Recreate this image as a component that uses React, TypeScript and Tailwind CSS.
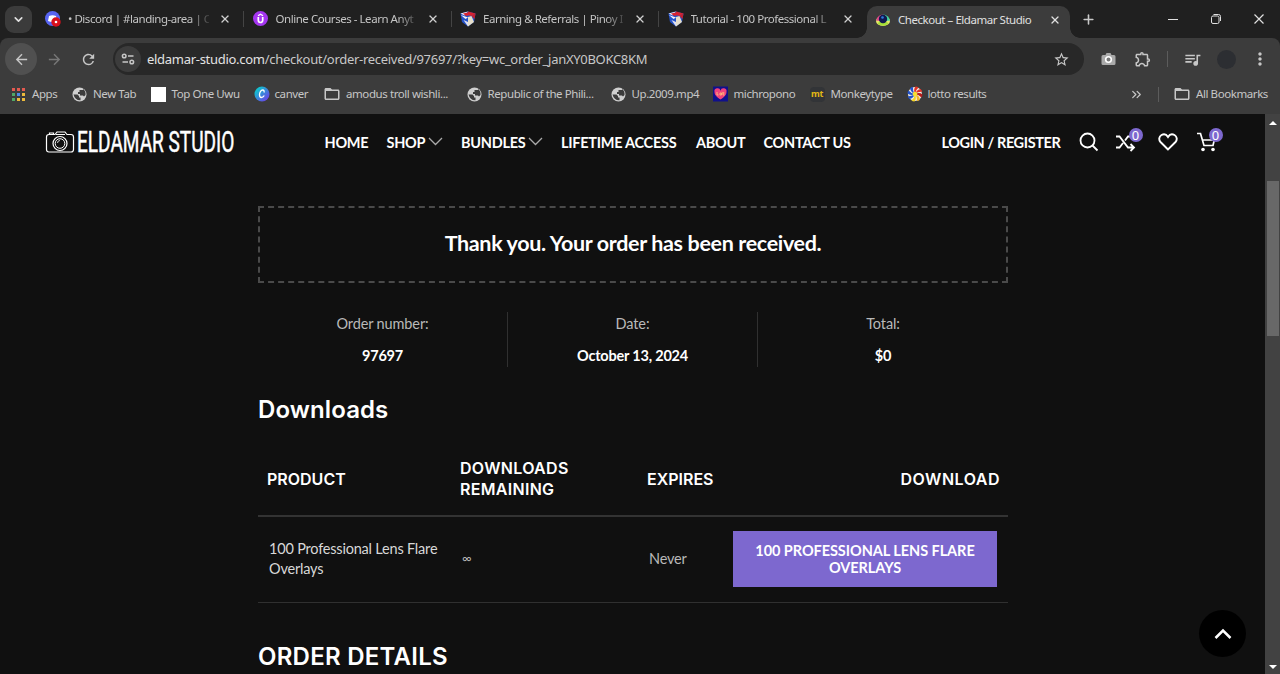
import { ReactNode } from "react";
import clsx from "clsx";
import {
  MdArrowBack,
  MdArrowForward,
  MdFolderOpen,
  MdMoreVert,
  MdOutlineExtension,
  MdQueueMusic,
  MdRefresh,
  MdStarBorder,
} from "react-icons/md";
import { ChevronDown, ChevronsRight, Plus, X } from "lucide-react";

function DiscordIcon() {
  return (
    <svg width="16" height="16" viewBox="0 0 16 16">
      <circle cx="7.5" cy="7.5" r="7.5" fill="#5865f2" />
      <path d="M4 5q3.500-1.500 7 0l1 5q-4.500 2-9 0z" fill="#fff" />
      <circle cx="11" cy="11" r="4.700" fill="#d8101c" />
      <circle cx="11" cy="11" r="1.300" fill="#fff" />
    </svg>
  );
}

function UdemyIcon() {
  return (
    <svg width="16" height="16" viewBox="0 0 16 16">
      <circle cx="7.500" cy="7.500" r="7.500" fill="#a435f0" />
      <path d="M5 4.800 7.500 3.200 10 4.800" fill="none" stroke="#fff" strokeWidth="1.300" />
      <path d="M5.300 6v3.300a2.200 2.200 0 0 0 4.400 0V6" fill="none" stroke="#fff" strokeWidth="1.700" />
    </svg>
  );
}

function CubeIcon() {
  return (
    <svg width="16" height="16" viewBox="0 0 16 16">
      <path d="M.5 2.500 8 .5l7.500 2L14 11l-6 4.500L2 11z" fill="#2452c8" />
      <path d="M.5 2.500 8 .5 4.500 4.500z" fill="#e8e8f4" />
      <path d="M8 .5l7.500 2-4 2.500L8 4z" fill="#d8232f" />
      <path d="M3 2.500 8 1.500 10 4 6 5z" fill="#d8232f" />
      <path d="M8 6l3.500-1L14 11l-6 4.500z" fill="#e6dfcb" />
      <path d="M.8 4 8 6.500 5.500 8z" fill="#f4f4ff" />
      <path d="M11.500 5l4-2.500L14.500 8z" fill="#c51f2c" />
      <path d="M3.500 9 8 11v4.500z" fill="#dcdff2" />
    </svg>
  );
}

function EyeIcon() {
  return (
    <svg width="16" height="16" viewBox="0 0 16 16">
      <ellipse cx="8" cy="9" rx="7" ry="5" fill="#e9e86a" />
      <path d="M1 8.500Q3 2.500 8 2.500L5 9z" fill="#e0468b" />
      <path d="M8 2.500Q13.500 3 15 8.500L11 9z" fill="#42d6a0" />
      <path d="M2.500 11.500q5.500 4.500 11 0l-2-2H4.500z" fill="#a5df38" />
      <circle cx="8" cy="7" r="4.200" fill="#101a50" />
      <circle cx="7.500" cy="5.500" r="1.300" fill="#2d7ddb" />
    </svg>
  );
}

function GlobeIcon() {
  return (
    <svg width="15" height="15" viewBox="0 0 15 15">
      <circle cx="7.500" cy="7.500" r="7" fill="#cfcfcf" />
      <path d="M1.500 7.500h4l1.500 1.500v1.500h1.500v2.800Q3 13.500 1.500 7.500z" fill="#3c3c3c" />
      <path d="M7.500 3h3.500v-1q3 2 2.500 6l-1.500 1.500-1-1H8V7H6V5h1.500z" fill="#3c3c3c" />
    </svg>
  );
}

function AppsIcon() {
  const colors = [
    "bg-[#e35a50]", "bg-[#e35a50]", "bg-[#e35a50]",
    "bg-[#4fa866]", "bg-[#4c8ae8]", "bg-[#edbb3c]",
    "bg-[#4fa866]", "bg-[#edbb3c]", "bg-[#edbb3c]",
  ];
  return (
    <div className="ml-px grid w-[13px] grid-cols-3 gap-[2px]">
      {colors.map((color, i) => (
        <span key={i} className={clsx("h-[3px]", color)} />
      ))}
    </div>
  );
}

function CanvaIcon() {
  return (
    <svg width="16" height="16" viewBox="0 0 16 16">
      <defs>
        <linearGradient id="canva" x1="0" y1="0" x2="1" y2="1">
          <stop offset=".2" stopColor="#12bfd0" />
          <stop offset="1" stopColor="#7a2bea" />
        </linearGradient>
      </defs>
      <circle cx="8" cy="8" r="7.500" fill="url(#canva)" />
      <path d="M10 6.500Q10.500 4 8.700 4C6.800 4 5.500 6.500 5.500 8.800c0 3.800 3.200 3.200 4.800.7" fill="none" stroke="#fff" strokeWidth="1.300" />
    </svg>
  );
}

function HeartTileIcon() {
  return (
    <svg width="16" height="16" viewBox="0 0 16 16">
      <rect width="15" height="15" y=".5" fill="#10108c" />
      <path d="M7.500 13.500C3 10.500 1.500 8.500 1.500 6a3 3 0 0 1 6-1.300 3 3 0 0 1 6 1.300c0 2.500-1.500 4.500-6 7.500z" fill="#f0427c" />
      <path d="M4 6v3h1.500M7 7h1.500v2H7zM10 6v3h1.500M9.500 7h2" stroke="#ffc078" strokeWidth=".9" fill="none" />
    </svg>
  );
}

function PinwheelIcon() {
  const blades = ["#e33327", "#e33327", "#b31d1d", "#f4b427", "#f4d427", "#2453c9", "#2453c9", "#2453c9"];
  return (
    <svg width="16" height="16" viewBox="0 0 16 16">
      <circle cx="8" cy="8" r="7" fill="#f2efe6" />
      {blades.map((fill, i) => (
        <path key={i} d="M8 8Q6 3.500 8.500.5 10.500.5 11.500 1.500 8.500 4 8 8z" fill={fill} transform={`rotate(${i * 45} 8 8)`} />
      ))}
      <circle cx="8" cy="8" r="2.300" fill="#f8df32" />
    </svg>
  );
}

type Tab = { title: string; icon: ReactNode };

const tabs: Tab[] = [
  { title: "• Discord | #landing-area | O", icon: <DiscordIcon /> },
  { title: "Online Courses - Learn Anyt", icon: <UdemyIcon /> },
  { title: "Earning & Referrals | Pinoy I", icon: <CubeIcon /> },
  { title: "Tutorial - 100 Professional L", icon: <CubeIcon /> },
];

function TabStrip() {
  return (
    <div className="flex h-[38px] items-center bg-[#202020]">
      <div className="ml-[5px] mr-[5px] flex size-[27px] shrink-0 items-center justify-center rounded-[9px] bg-[#3b3b3b]">
        <ChevronDown size={13} strokeWidth={3} className="text-[#e0e0e0]" />
      </div>
      {tabs.map((tab, i) => (
        <div key={tab.title} className="flex w-[207.500px] shrink-0 items-center pl-2">
          <div className="w-[23px] shrink-0">{tab.icon}</div>
          <div className="w-[141px] whitespace-nowrap text-[11.500px] tracking-[-0.46px] text-[#c4c4c4] [mask-image:linear-gradient(to_right,black_122px,transparent_145px)]">
            {tab.title}
          </div>
          <X size={12} strokeWidth={2.600} className="ml-[10px] shrink-0 text-[#d0d0d0]" />
          {i < tabs.length - 1 && <span className="ml-[12px] h-4 w-px shrink-0 bg-[#444]" />}
        </div>
      ))}
      <div className="relative flex h-8 w-[202.500px] shrink-0 items-center self-end rounded-t-[10px] bg-[#3c3c3c] pb-[5px] pl-[8px]">
        <span className="absolute -left-[10px] bottom-0 size-[10px] bg-[radial-gradient(circle_at_0_0,#202020_9.500px,#3c3c3c_10px)]" />
        <span className="absolute -right-[10px] bottom-0 size-[10px] bg-[radial-gradient(circle_at_100%_0,#202020_9.500px,#3c3c3c_10px)]" />
        <div className="w-[23px] shrink-0"><EyeIcon /></div>
        <div className="w-[141px] whitespace-nowrap text-[11.500px] tracking-[-0.46px] text-[#e0e0e0]">Checkout – Eldamar Studio</div>
        <X size={12} strokeWidth={2.600} className="ml-[10px] text-[#e0e0e0]" />
      </div>
      <Plus size={15} strokeWidth={2.500} className="ml-[11.500px] text-[#c8c8c8]" />
      <div className="ml-auto flex items-center text-[#e0e0e0]">
        <span className="mr-[32px] h-px w-[10px] bg-[#e0e0e0]" />
        <svg width="12" height="12" viewBox="0 0 12 12" fill="none" stroke="currentColor" className="mr-[31px]">
          <rect x="1.500" y="3" width="7.500" height="7.500" rx="1.500" />
          <path d="M3.500 1.500H8.500a2 2 0 0 1 2 2V8" />
        </svg>
        <svg width="12" height="12" viewBox="0 0 12 12" stroke="currentColor" strokeWidth="1.200" className="mr-[15px]">
          <path d="M1.500 1.500l9 9M10.500 1.500l-9 9" />
        </svg>
      </div>
    </div>
  );
}

function Toolbar() {
  return (
    <div className="flex h-[42px] items-center rounded-t-lg bg-[#3c3c3c] text-[#c7c7c7]">
      <div className="ml-[5px] flex size-8 shrink-0 items-center justify-center rounded-full bg-[#505050]">
        <MdArrowBack size={17} />
      </div>
      <MdArrowForward size={17} className="ml-[9px] shrink-0 text-[#777]" />
      <MdRefresh size={17} className="ml-[17px] shrink-0" />
      <div className="ml-4 flex h-8 w-[971px] shrink-0 items-center rounded-full bg-[#282828] pl-[2px]">
        <div className="flex size-[26px] items-center justify-center rounded-full bg-[#3c3c3c]">
          <svg width="14" height="14" viewBox="0 0 14 14" fill="none" stroke="currentColor" strokeWidth="1.500">
            <circle cx="3.200" cy="4" r="1.800" />
            <path d="M7 4h5.500M1.500 10H7" />
            <circle cx="10.800" cy="10" r="1.800" />
          </svg>
        </div>
        <div className="ml-[6px] whitespace-nowrap pt-px text-[13px] tracking-[-0.29px] text-[#c7c7c7]">
          <span className="text-[#e3e3e3]">eldamar-studio.com</span>/checkout/order-received/97697/?key=wc_order_janXY0BOKC8KM
        </div>
        <MdStarBorder size={17} className="ml-auto mr-[14px]" />
      </div>
      <svg width="15" height="14" viewBox="0 0 15 14" className="ml-[17px] shrink-0">
        <path d="M2 3h2.500L5.500 1h4L10.500 3H13q1.500 0 1.500 1.500v7Q14.500 13 13 13H2Q.5 13 .5 11.500v-7Q.5 3 2 3z" fill="#aaa" />
        <circle cx="7.500" cy="7.500" r="2.800" fill="#777" stroke="#fff" strokeWidth="1.600" />
      </svg>
      <MdOutlineExtension size={18} className="ml-[18px] shrink-0" />
      <span className="ml-[15px] h-4 w-px shrink-0 bg-[#5c5c5c]" />
      <MdQueueMusic size={19} className="ml-[15px] shrink-0" />
      <span className="ml-[15px] size-[19px] shrink-0 rounded-full bg-[#2c2e32]" />
      <MdMoreVert size={20} className="ml-[14px] shrink-0" />
    </div>
  );
}

const folder = <MdFolderOpen size={18} className="-ml-0.5 text-[#c7c7c7]" />;

// width is the distance to the start of the next bookmark
const bookmarks = [
  { label: "Apps", icon: <AppsIcon />, width: "w-[61px]" },
  { label: "New Tab", icon: <GlobeIcon />, width: "w-[78.500px]" },
  { label: "Top One Uwu", icon: <span className="block size-[15px] bg-white" />, width: "w-[103px]" },
  { label: "canver", icon: <CanvaIcon />, width: "w-[71.500px]" },
  { label: "amodus troll wishli...", icon: folder, width: "w-[141.500px]" },
  { label: "Republic of the Phili...", icon: <GlobeIcon />, width: "w-[144px]" },
  { label: "Up.2009.mp4", icon: <GlobeIcon />, width: "w-[102px]" },
  { label: "michropono", icon: <HeartTileIcon />, width: "w-[97px]" },
  {
    label: "Monkeytype",
    icon: <span className="flex size-[15px] items-center justify-center rounded-sm bg-[#323437] text-[9px] font-bold text-[#e2b714]">mt</span>,
    width: "w-[97px]",
  },
  { label: "lotto results", icon: <PinwheelIcon />, width: "w-[90px]" },
];

function BookmarksBar() {
  return (
    <div className="flex h-[34px] items-center bg-[#3c3c3c] pb-[6px] pl-[11px] text-[11.500px] tracking-[-0.42px] text-[#c7c7c7]">
      {bookmarks.map((item) => (
        <div key={item.label} className={clsx("flex shrink-0 items-center whitespace-nowrap", item.width)}>
          <div className="w-[21px] shrink-0">{item.icon}</div>
          {item.label}
        </div>
      ))}
      <ChevronsRight size={15} className="ml-auto shrink-0" />
      <span className="ml-[14px] h-[15px] w-px shrink-0 bg-[#5c5c5c]" />
      <MdFolderOpen size={18} className="ml-[14px] shrink-0" />
      <span className="ml-[5px] w-[84px] shrink-0 whitespace-nowrap">All Bookmarks</span>
    </div>
  );
}

function Logo() {
  return (
    <svg width="194" height="40" viewBox="0 -5 194 40" fill="none" stroke="#fff" className="-mr-1">
      <path d="M4 7.500h6l2-2.500h8l2 2.500h4q2.500 0 2.500 2.500v12.500q0 2.500-2.500 2.500h-22Q1.500 25 1.500 22.500V10Q1.500 7.500 4 7.500zM4.500 7V6h4v1.500M11 7.500h9" strokeWidth="1.200" />
      <circle cx="15" cy="16.500" r="7" strokeWidth="1.200" />
      <circle cx="15" cy="16.500" r="4.800" />
      <path d="M12.500 16a2.500 2.500 0 0 1 2.500-2.500" strokeWidth=".8" />
      <text
        transform="translate(32 25) scale(.56 1)"
        fill="#fff"
        stroke="#fff"
        strokeWidth=".5"
        fontFamily="Roboto, 'Liberation Sans', sans-serif"
        fontSize="29.500"
        fontWeight="400"
        textLength="281"
        lengthAdjust="spacingAndGlyphs"
      >
        ELDAMAR STUDIO
      </text>
    </svg>
  );
}

const navItems = [
  { label: "HOME", width: "w-[62px]" },
  { label: "SHOP", width: "w-[74.500px]", menu: true },
  { label: "BUNDLES", width: "w-[100px]", menu: true },
  { label: "LIFETIME ACCESS", width: "w-[135px]" },
  { label: "ABOUT", width: "w-[67.500px]" },
  { label: "CONTACT US", width: "w-[178px]" },
];

function CountBadge() {
  return (
    <span className="absolute -right-[7px] -top-[4px] flex size-[14px] items-center justify-center rounded-full bg-[#7d68cf] font-['Noto_Sans',sans-serif] text-[13px] font-normal leading-none text-white">
      0
    </span>
  );
}

function SiteHeader() {
  return (
    <header className="flex h-14 items-center pl-[45px] font-['Lato',sans-serif] text-[14.500px] font-bold text-white">
      <Logo />
      <nav className="ml-[89.500px] flex pt-[2px] tracking-[-0.27px]">
        {navItems.map((item) => (
          <div key={item.label} className={clsx("flex shrink-0 items-center whitespace-nowrap", item.width)}>
            {item.label}
            {item.menu && (
              <svg width="15" height="9" viewBox="0 0 15 9" fill="none" stroke="#aaa" strokeWidth="1.300" className="mb-[3px] ml-auto mr-[18px]">
                <path d="M1 1l6.500 6.500L14 1" />
              </svg>
            )}
          </div>
        ))}
        <div className="w-[137px] whitespace-nowrap tracking-[-0.4px]">LOGIN / REGISTER</div>
      </nav>
      <div className="flex items-center">
        <svg width="20" height="20" viewBox="0 0 20 20" fill="none" stroke="#fff" strokeWidth="1.800">
          <circle cx="8.500" cy="8.500" r="7" />
          <path d="M13.500 13.500l5 5" />
        </svg>
        <div className="relative ml-4">
          <svg width="21" height="20" viewBox="0 0 21 20" fill="none" stroke="#fff" strokeWidth="1.800">
            <path d="M1 4.500h3.500l8.500 11h6M1 15.500h3.500L8 11M10 8.500 13 4.500H19M15.500 12l3.500 3.500-3.500 3.500" />
          </svg>
          <CountBadge />
        </div>
        <svg width="20" height="18" viewBox="0 0 20 18" fill="none" stroke="#fff" strokeWidth="1.900" className="ml-[22px]">
          <path d="M10 16.500 2.500 9C.5 6.800 1 3.500 3.500 2 6 .6 8.500 1.500 10 4 11.500 1.500 14 .6 16.500 2 19 3.500 19.500 6.800 17.500 9z" />
        </svg>
        <div className="relative ml-[18px]">
          <svg width="20" height="20" viewBox="0 0 20 20" fill="none" stroke="#fff" strokeWidth="1.700">
            <path d="M1 1.500h3.500L8 13.500h9L19 5M6 8h12" />
            <circle cx="7" cy="17.500" r="1.800" fill="#fff" stroke="none" />
            <circle cx="17" cy="17.500" r="1.800" fill="#fff" stroke="none" />
          </svg>
          <CountBadge />
        </div>
      </div>
    </header>
  );
}

const orderFacts = [
  { label: "Order number:", value: "97697" },
  { label: "Date:", value: "October 13, 2024" },
  { label: "Total:", value: "$0" },
];

function OrderSummary() {
  return (
    <main className="ml-[258px] mt-9 w-[750px] font-['Lato',sans-serif] text-[14.500px] tracking-[-0.2px] text-[#b9b9b9]">
      <div className="flex h-[77px] items-center justify-center border-2 border-dashed border-[#4a4a4a] pb-[2px] text-[21.500px] font-bold tracking-[-0.35px] text-white">
        Thank you. Your order has been received.
      </div>
      <div className="mt-[29px] grid h-[54px] grid-cols-3 text-center">
        {orderFacts.map((fact) => (
          <div key={fact.label} className="border-r border-[#303030] last:border-r-0">
            <div className="pt-px leading-[22px] tracking-[-0.12px]">{fact.label}</div>
            <div className="mt-[10px] font-bold leading-[22px] text-white">{fact.value}</div>
          </div>
        ))}
      </div>
      <h2 className="mt-[29px] font-['Inter',sans-serif] text-[24px] font-semibold leading-[30px] tracking-[0.1px] text-white">Downloads</h2>
      <div className="mt-[17px] grid h-[75px] grid-cols-[193px_187px_1fr_auto] items-center border-b-2 border-[#333] px-[9px] pt-px font-['Inter',sans-serif] text-[16px] font-semibold leading-[21px] tracking-[0.300px] text-white">
        <div className="tracking-[0px]">PRODUCT</div>
        <div>DOWNLOADS<br />REMAINING</div>
        <div className="tracking-[0px]">EXPIRES</div>
        <div className="-mr-px tracking-[0.500px]">DOWNLOAD</div>
      </div>
      <div className="grid h-[86px] grid-cols-[193px_187px_1fr_264px] items-center border-b border-[#303030] px-[11px] pb-px">
        <div className="leading-5 text-[#d8d8d8]">100 Professional Lens Flare<br />Overlays</div>
        <div className="text-[13px]">∞</div>
        <div>Never</div>
        <div className="flex h-[56px] items-center justify-center bg-[#7d68cf] text-center font-bold leading-[17px] tracking-[-0.06px] text-white">
          100 PROFESSIONAL LENS FLARE<br />OVERLAYS
        </div>
      </div>
      <h2 className="mt-[38px] font-['Inter',sans-serif] text-[24px] font-semibold leading-8 tracking-[0.25px] text-white">ORDER DETAILS</h2>
    </main>
  );
}

export default function App() {
  return (
    <div className="flex h-[674px] w-[1280px] flex-col overflow-hidden bg-[#202020] font-['Noto_Sans',sans-serif]">
      <TabStrip />
      <Toolbar />
      <BookmarksBar />
      <div className="flex h-[560px]">
        <div className="relative w-[1265px] overflow-hidden bg-[#101010]">
          <SiteHeader />
          <OrderSummary />
          <button className="absolute bottom-[17px] right-[19px] flex size-[47px] items-center justify-center rounded-full bg-black">
            <svg width="18" height="12" viewBox="0 0 18 12" fill="none" stroke="#fff" strokeWidth="2.500">
              <path d="M1.500 10 9 2.500l7.500 7.500" />
            </svg>
          </button>
        </div>
        <div className="flex w-[15px] flex-col items-center bg-[#424242]">
          <span className="mt-[7px] border-x-4 border-b-4 border-x-transparent border-b-white" />
          <span className="mt-[56px] h-[155px] w-3 bg-[#686868]" />
          <span className="mb-[5px] mt-auto border-x-4 border-t-4 border-x-transparent border-t-white" />
        </div>
      </div>
    </div>
  );
}
